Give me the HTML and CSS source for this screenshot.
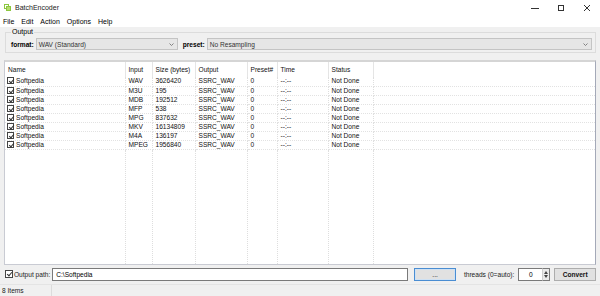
FILE: index.html
```html
<!DOCTYPE html>
<html lang="en">
<head>
    <meta charset="UTF-8">
    <title>BatchEncoder</title>
    <link rel="stylesheet" href="styles.css">
</head>
<body>
    <div class="window">
        <div class="title-bar">
            <svg class="app-icon" width="7" height="7" viewBox="0 0 7 7">
                <rect x="0.5" y="0.5" width="4" height="4" fill="none" stroke="#8cc63f" stroke-width="1"/>
                <rect x="2.5" y="2.5" width="4" height="4" fill="#b5dc6e" stroke="#8cc63f" stroke-width="1"/>
            </svg>
            <span class="title-text">BatchEncoder</span>
            <div class="win-controls">
                <span class="win-btn"><svg width="8" height="8" viewBox="0 0 8 8"><line x1="0" y1="4.5" x2="8" y2="4.5" stroke="#333" stroke-width="1"/></svg></span>
                <span class="win-btn"><svg width="8" height="8" viewBox="0 0 8 8"><rect x="1.5" y="1.5" width="5" height="5" fill="none" stroke="#333" stroke-width="1"/></svg></span>
                <span class="win-btn"><svg width="8" height="8" viewBox="0 0 8 8"><path d="M1 1 L7 7 M7 1 L1 7" stroke="#333" stroke-width="1"/></svg></span>
            </div>
        </div>

        <ul class="menu-bar">
            <li>File</li>
            <li>Edit</li>
            <li>Action</li>
            <li>Options</li>
            <li>Help</li>
        </ul>

        <div class="content">
            <fieldset class="output-group">
                <legend>Output</legend>
                <div class="format-row">
                    <label class="field-label">format:</label>
                    <div class="combo combo-format">
                        <span>WAV (Standard)</span>
                        <svg class="combo-arrow" width="5" height="3" viewBox="0 0 5 3"><path d="M0.5 0.5 L2.5 2.5 L4.5 0.5" fill="none" stroke="#777" stroke-width="0.9"/></svg>
                    </div>
                    <label class="field-label">preset:</label>
                    <div class="combo combo-preset">
                        <span>No Resampling</span>
                        <svg class="combo-arrow" width="5" height="3" viewBox="0 0 5 3"><path d="M0.5 0.5 L2.5 2.5 L4.5 0.5" fill="none" stroke="#777" stroke-width="0.9"/></svg>
                    </div>
                </div>
            </fieldset>

            <div class="list-view">
                <table class="file-table">
                    <colgroup>
                        <col class="c-name">
                        <col class="c-input">
                        <col class="c-size">
                        <col class="c-output">
                        <col class="c-preset">
                        <col class="c-time">
                        <col class="c-status">
                        <col class="c-rest">
                    </colgroup>
                    <thead>
                        <tr>
                            <th>Name</th>
                            <th>Input</th>
                            <th>Size (bytes)</th>
                            <th>Output</th>
                            <th>Preset#</th>
                            <th>Time</th>
                            <th>Status</th>
                            <th></th>
                        </tr>
                    </thead>
                    <tbody id="file-rows"></tbody>
                </table>
            </div>

            <div class="path-row">
                <span class="check checked"></span>
                <span class="path-label">Output path:</span>
                <div class="text-box path-box">C:\Softpedia</div>
                <button class="btn btn-browse">...</button>
                <span class="threads-label">threads (0=auto):</span>
                <div class="spin">
                    <div class="text-box spin-box">0</div>
                    <div class="spin-arrows">
                        <svg width="4" height="3" viewBox="0 0 4 3"><path d="M0 3 L2 0 L4 3 Z" fill="#444"/></svg>
                        <svg width="4" height="3" viewBox="0 0 4 3"><path d="M0 0 L2 3 L4 0 Z" fill="#444"/></svg>
                    </div>
                </div>
                <button class="btn btn-convert">Convert</button>
            </div>
        </div>

        <div class="status-bar">
            <span class="status-cell">8 Items</span>
            <span class="status-rest"></span>
        </div>
    </div>
    <script>
        const files = [
            ["WAV", "3626420"],
            ["M3U", "195"],
            ["MDB", "192512"],
            ["MFP", "538"],
            ["MPG", "837632"],
            ["MKV", "16134809"],
            ["M4A", "136197"],
            ["MPEG", "1956840"],
        ];

        const tbody = document.getElementById("file-rows");

        files.forEach(([input, size]) => {
            const row = document.createElement("tr");
            row.className = "file-row";
            row.innerHTML =
                '<td><span class="check checked"></span>Softpedia</td>' +
                "<td>" + input + "</td>" +
                "<td>" + size + "</td>" +
                "<td>SSRC_WAV</td>" +
                "<td>0</td>" +
                "<td>--:--</td>" +
                "<td>Not Done</td>" +
                "<td></td>";
            tbody.appendChild(row);
        });

        // empty area keeps the column lines
        const filler = document.createElement("tr");
        filler.className = "filler-row";
        filler.innerHTML = "<td></td>".repeat(8);
        tbody.appendChild(filler);
    </script>
</body>
</html>
```

FILE: styles.css
```css
* {
    box-sizing: border-box;
}

body {
    margin: 0;
    width: 600px;
    height: 296px;
    overflow: hidden;
    font-family: "Liberation Sans", Arial, sans-serif;
    font-size: 6.6px;
    color: #000;
    background: #f0f0f0;
    white-space: nowrap;
}

.window {
    display: flex;
    flex-direction: column;
    height: 296px;
}

.title-bar {
    height: 15px;
    display: flex;
    align-items: center;
    background: #fff;
    padding-left: 4px;
}

.app-icon {
    margin-right: 4px;
}

.title-text {
    font-size: 7px;
    color: #222;
}

.win-controls {
    margin-left: auto;
    display: flex;
    height: 15px;
}

.win-btn {
    width: 26px;
    display: flex;
    align-items: center;
    justify-content: center;
}

.menu-bar {
    list-style: none;
    margin: 0;
    padding: 0 0 0 1px;
    height: 12px;
    display: flex;
    align-items: center;
    background: #fff;
    font-size: 7px;
}

.menu-bar li {
    padding: 0 2px 0 2px;
    margin-right: 3px;
}

.content {
    flex: 1;
    display: flex;
    flex-direction: column;
    padding: 1px 4px 0 4px;
}

.output-group {
    margin: 0 0 0 1px;
    padding: 2px 3px 3px 5px;
    border: 1px solid #dcdcdc;
    width: 591px;
    height: 25px;
}

.output-group legend {
    padding: 0 1px;
    margin-left: 0;
    font-size: 7px;
    line-height: 8px;
}

.format-row {
    display: flex;
    align-items: center;
    height: 12px;
}

.field-label {
    font-weight: bold;
    margin-right: 2px;
}

.combo {
    height: 12px;
    display: flex;
    align-items: center;
    justify-content: space-between;
    background: #e6e6e6;
    border: 1px solid #c4c4c4;
    padding: 0 3px 0 2px;
    color: #333;
}

.combo-format {
    width: 142px;
    margin-right: 5px;
}

.combo-preset {
    flex: 1;
}

.list-view {
    margin-top: 7px;
    height: 205px;
    background: #fff;
    border: 1px solid #c9cbd3;
    border-top: 2px solid #d5d5d5;
    border-right-color: #a4a9b8;
    overflow: hidden;
}

.file-table {
    width: 100%;
    height: 100%;
    border-collapse: collapse;
    table-layout: fixed;
}

.c-name { width: 120px; }
.c-input { width: 27px; }
.c-size { width: 43px; }
.c-output { width: 52px; }
.c-preset { width: 30px; }
.c-time { width: 51px; }
.c-status { width: 45px; }

.file-table th {
    height: 15px;
    text-align: left;
    font-weight: normal;
    padding: 0 0 0 3px;
    border-right: 1px solid #e5e5e5;
    color: #111;
}

.file-table th:last-child {
    border-right: none;
}

.file-table td {
    padding: 0 0 0 3px;
    overflow: hidden;
    border-right: 1px dotted #dedede;
    color: #111;
}

.file-table td:last-child {
    border-right: none;
}

.file-row td {
    height: 9px;
    line-height: 8px;
    border-bottom: 1px dotted #e2e2e2;
}

.file-row td:first-child {
    padding-left: 2px;
}

.filler-row td {
    height: auto;
}

.check {
    display: inline-block;
    width: 7px;
    height: 7px;
    border: 1px solid #444;
    background: #fff;
    vertical-align: -1px;
    margin-right: 2px;
    position: relative;
}

.check.checked::after {
    content: "";
    position: absolute;
    left: 1.5px;
    top: 0;
    width: 2px;
    height: 4px;
    border-right: 1px solid #333;
    border-bottom: 1px solid #333;
    transform: rotate(40deg);
}

.path-row {
    margin-top: 2px;
    height: 14px;
    display: flex;
    align-items: center;
    padding-left: 1px;
}

.path-row .check {
    width: 8px;
    height: 8px;
    margin-right: 1px;
    vertical-align: 0;
}

.path-label {
    color: #222;
    margin-right: 2px;
}

.text-box {
    height: 13px;
    background: #fff;
    border: 1px solid #7a7a7a;
    display: flex;
    align-items: center;
    padding-left: 3px;
}

.path-box {
    width: 359px;
    margin-right: 6px;
}

.btn {
    font-family: inherit;
    font-size: 6.6px;
    height: 13px;
    padding: 0;
    background: #e1e1e1;
    border: 1px solid #adadad;
    color: #111;
}

.btn-browse {
    width: 42px;
    border-color: #4a8dd2;
    box-shadow: inset 0 0 0 1px #cfe1f3;
    margin-right: 8px;
}

.threads-label {
    color: #222;
    margin-right: 4px;
}

.spin {
    display: flex;
    height: 13px;
    margin-right: 4px;
}

.spin-box {
    width: 24px;
    justify-content: center;
    padding-left: 0;
    border-right: none;
}

.spin-arrows {
    width: 8px;
    display: flex;
    flex-direction: column;
    justify-content: center;
    gap: 1px;
    border: 1px solid #7a7a7a;
    border-left: 1px solid #cfcfcf;
    background: #eaeaea;
    align-items: center;
}

.btn-convert {
    width: 42px;
    font-weight: bold;
}

.status-bar {
    margin-top: 3px;
    height: 12px;
    display: flex;
    align-items: center;
    border-top: 1px solid #e4e4e4;
}

.status-cell {
    width: 52px;
    padding-left: 2px;
    border-right: 1px solid #dcdcdc;
    height: 100%;
    display: flex;
    align-items: center;
    color: #222;
}

.status-rest {
    flex: 1;
}
```
